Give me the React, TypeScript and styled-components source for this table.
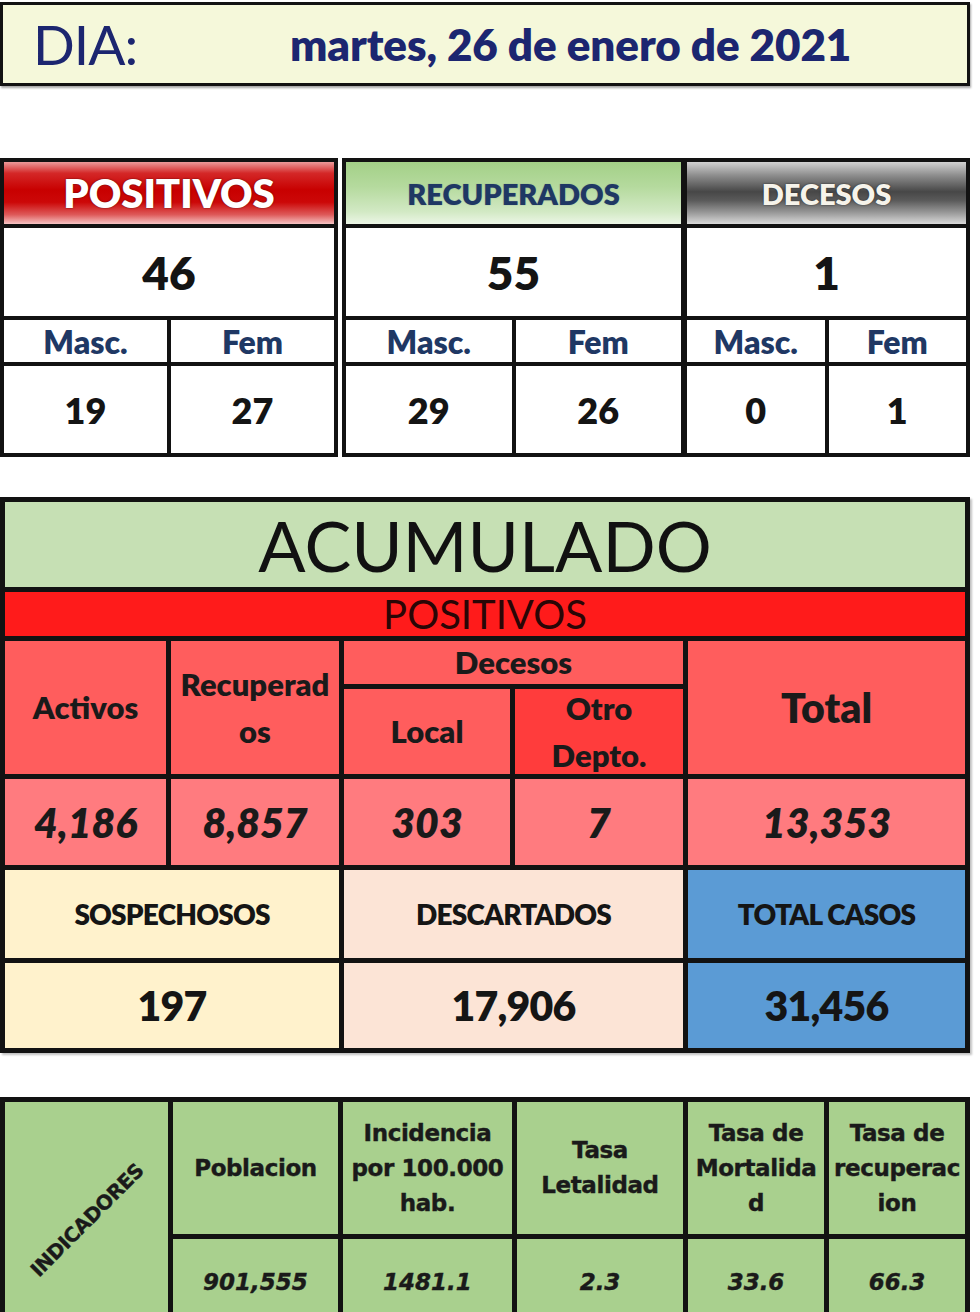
import React from "react";
import styled, { createGlobalStyle, css } from "styled-components";

const GlobalStyle = createGlobalStyle`
  *, *::before, *::after { box-sizing: border-box; }
  html, body { margin: 0; padding: 0; background: #ffffff; }
  body { font-family: Lato, "Open Sans", "Liberation Sans", sans-serif; color: #111; }
`;

const Page = styled.div`
  width: 980px;
  padding-top: 2px;
  display: flex;
  flex-direction: column;
`;

/* ---------- Date bar ---------- */
const DateBar = styled.div`
  width: 970px;
  height: 84px;
  border: 3px solid #121212;
  background: #f5f8da;
  display: flex;
  align-items: center;
  box-shadow: 1px 2px 2px rgba(0, 0, 0, 0.35);
`;

const DiaLabel = styled.span`
  width: 287px;
  padding-left: 30px;
  font-size: 55px;
  font-weight: 400;
  line-height: 1;
  color: #1c2670;
  letter-spacing: -1px;
`;

const DateText = styled.span`
  font-size: 44px;
  font-weight: 800;
  line-height: 1;
  color: #1c2670;
  letter-spacing: -0.1px;
`;

/* ---------- Daily table ---------- */
const DailyRow = styled.div`
  margin-top: 72px;
  width: 970px;
  display: flex;
  gap: 4px;
`;

const Joined = styled.div`
  display: flex;
`;

const Group = styled.div<{ $w: number; $joined?: boolean }>`
  width: ${(p) => p.$w}px;
  border: 4px solid #121212;
  ${(p) => p.$joined && css`border-left-width: 2px;`}
  background: #121212;
  display: grid;
  grid-template-columns: 1fr 1fr;
  grid-template-rows: 62px 88px 42px 87px;
  gap: 4px;
`;

type Tone = "red" | "green" | "grey";

const toneBg: Record<Tone, string> = {
  red: "linear-gradient(to bottom, #ec9a9a 0%, #d42828 18%, #c80000 45%, #cc0808 65%, #de5a5a 85%, #f6c4c4 100%)",
  green: "linear-gradient(to bottom, #a3d087 0%, #b5da9e 40%, #d2e9c4 80%, #ecf6e6 100%)",
  grey: "linear-gradient(to bottom, #d2d2d2 0%, #8c8c8c 22%, #474747 48%, #5a5a5a 62%, #9a9a9a 82%, #dadada 100%)",
};

const toneText: Record<Tone, string> = {
  red: "#ffffff",
  green: "#1f3864",
  grey: "#f6f3ea",
};

const GroupHead = styled.div<{ $tone: Tone; $big?: boolean }>`
  grid-column: 1 / span 2;
  background: ${(p) => toneBg[p.$tone]};
  color: ${(p) => toneText[p.$tone]};
  font-size: ${(p) => (p.$big ? 40 : 29)}px;
  font-weight: 800;
  display: flex;
  align-items: center;
  justify-content: center;
  text-shadow: ${(p) => (p.$tone === "green" ? "0 0 1px rgba(31,56,100,0.5)" : "0 0 2px rgba(0,0,0,0.6)")};
`;

const GroupTotal = styled.div`
  grid-column: 1 / span 2;
  background: #fff;
  font-size: 46px;
  font-weight: 800;
  display: flex;
  align-items: center;
  justify-content: center;
  color: #141414;
`;

const SexLabel = styled.div`
  background: #fff;
  color: #1f3864;
  font-size: 32px;
  font-weight: 800;
  display: flex;
  align-items: center;
  justify-content: center;
`;

const SexValue = styled.div`
  background: #fff;
  color: #141414;
  font-size: 36px;
  font-weight: 800;
  display: flex;
  align-items: center;
  justify-content: center;
`;

/* ---------- Accumulated table ---------- */
const AccGrid = styled.div`
  margin-top: 40px;
  width: 970px;
  border: 5px solid #121212;
  background: #121212;
  display: grid;
  grid-template-columns: 161px 168px 166px 168px 1fr;
  grid-template-rows: 85px 44px 43px 85px 86px 88px 85px;
  gap: 5px;
  box-shadow: 2px 2px 2px rgba(0, 0, 0, 0.25);
`;

const AccTitle = styled.div`
  grid-column: 1 / -1;
  background: #c6e0b4;
  font-size: 70px;
  font-weight: 400;
  color: #111;
  display: flex;
  align-items: center;
  justify-content: center;
  line-height: 1;
`;

const AccBand = styled.div`
  grid-column: 1 / -1;
  background: #ff1b1b;
  font-size: 40px;
  font-weight: 400;
  color: #2a0606;
  display: flex;
  align-items: center;
  justify-content: center;
  line-height: 1;
`;

const HeadCell = styled.div<{ $col: string; $row: string; $dark?: boolean; $size?: number }>`
  grid-column: ${(p) => p.$col};
  grid-row: ${(p) => p.$row};
  background: ${(p) => (p.$dark ? "#ff3c3c" : "#ff5d5d")};
  font-size: ${(p) => p.$size ?? 31}px;
  font-weight: 800;
  line-height: 47px;
  color: #1a1a1a;
  display: flex;
  align-items: center;
  justify-content: center;
  text-align: center;
`;

const AccValue = styled.div`
  background: #ff7b7f;
  font-size: 41px;
  font-weight: 800;
  font-style: italic;
  color: #1a1a1a;
  display: flex;
  align-items: center;
  justify-content: center;
`;

type Kind = "sosp" | "desc" | "total";
const kindBg: Record<Kind, string> = {
  sosp: "#fff2cc",
  desc: "#fce4d6",
  total: "#5b9bd5",
};
const kindCol: Record<Kind, string> = {
  sosp: "1 / span 2",
  desc: "3 / span 2",
  total: "5",
};

const SummaryHead = styled.div<{ $kind: Kind }>`
  grid-column: ${(p) => kindCol[p.$kind]};
  background: ${(p) => kindBg[p.$kind]};
  font-size: 28px;
  font-weight: 800;
  letter-spacing: -0.8px;
  color: #151515;
  display: flex;
  align-items: center;
  justify-content: center;
`;

const SummaryValue = styled(SummaryHead)`
  font-size: 41px;
  letter-spacing: -0.8px;
`;

/* ---------- Indicators ---------- */
const IndGrid = styled.div`
  margin-top: 44px;
  width: 970px;
  border: 5px solid #121212;
  background: #121212;
  display: grid;
  grid-template-columns: 163px 165px 169px 166px 136px 1fr;
  grid-template-rows: 132px 95px;
  gap: 5px;
  font-family: "DejaVu Sans", Verdana, sans-serif;
`;

const IndSide = styled.div`
  grid-row: 1 / span 2;
  background: #a9d08e;
  display: flex;
  align-items: center;
  justify-content: center;
  overflow: hidden;
`;

const IndSideText = styled.span`
  display: inline-block;
  transform: rotate(-45deg);
  font-size: 20px;
  font-weight: 700;
  color: #1a1a1a;
  white-space: nowrap;
  letter-spacing: -0.5px;
  -webkit-text-stroke: 0.4px #1a1a1a;
  margin-top: 4px;
`;

const IndHead = styled.div`
  background: #a9d08e;
  font-size: 23px;
  font-weight: 700;
  line-height: 35px;
  color: #1a1a1a;
  letter-spacing: -0.4px;
  -webkit-text-stroke: 0.4px #1a1a1a;
  display: flex;
  align-items: center;
  justify-content: center;
  text-align: center;
`;

const IndValue = styled.div`
  background: #a9d08e;
  font-size: 23px;
  font-weight: 700;
  font-style: italic;
  color: #1a1a1a;
  -webkit-text-stroke: 0.4px #1a1a1a;
  display: flex;
  align-items: flex-start;
  justify-content: center;
  padding-top: 30px;
`;

const daily = [
  { label: "POSITIVOS", tone: "red" as Tone, total: "46", m: "19", f: "27" },
  { label: "RECUPERADOS", tone: "green" as Tone, total: "55", m: "29", f: "26" },
  { label: "DECESOS", tone: "grey" as Tone, total: "1", m: "0", f: "1" },
];

function DailyGroup({ d, w, joined }: { d: (typeof daily)[number]; w: number; joined?: boolean }) {
  return (
    <Group $w={w} $joined={joined}>
      <GroupHead $tone={d.tone} $big={d.tone === "red"}>
        {d.label}
      </GroupHead>
      <GroupTotal>{d.total}</GroupTotal>
      <SexLabel>Masc.</SexLabel>
      <SexLabel>Fem</SexLabel>
      <SexValue>{d.m}</SexValue>
      <SexValue>{d.f}</SexValue>
    </Group>
  );
}

export default function App() {
  return (
    <>
      <GlobalStyle />
      <Page>
        <DateBar>
          <DiaLabel>DIA:</DiaLabel>
          <DateText>martes, 26 de enero de 2021</DateText>
        </DateBar>

        <DailyRow>
          <DailyGroup d={daily[0]} w={338} />
          <Joined>
            <DailyGroup d={daily[1]} w={343} />
            <DailyGroup d={daily[2]} w={285} joined />
          </Joined>
        </DailyRow>

        <AccGrid>
          <AccTitle>ACUMULADO</AccTitle>
          <AccBand>POSITIVOS</AccBand>
          <HeadCell $col="1" $row="3 / span 2">Activos</HeadCell>
          <HeadCell $col="2" $row="3 / span 2">
            Recuperad
            <br />
            os
          </HeadCell>
          <HeadCell $col="3 / span 2" $row="3">Decesos</HeadCell>
          <HeadCell $col="5" $row="3 / span 2" $size={41}>Total</HeadCell>
          <HeadCell $col="3" $row="4">Local</HeadCell>
          <HeadCell $col="4" $row="4" $dark>
            Otro
            <br />
            Depto.
          </HeadCell>
          <AccValue>4,186</AccValue>
          <AccValue>8,857</AccValue>
          <AccValue>303</AccValue>
          <AccValue>7</AccValue>
          <AccValue>13,353</AccValue>
          <SummaryHead $kind="sosp">SOSPECHOSOS</SummaryHead>
          <SummaryHead $kind="desc">DESCARTADOS</SummaryHead>
          <SummaryHead $kind="total">TOTAL CASOS</SummaryHead>
          <SummaryValue $kind="sosp">197</SummaryValue>
          <SummaryValue $kind="desc">17,906</SummaryValue>
          <SummaryValue $kind="total">31,456</SummaryValue>
        </AccGrid>

        <IndGrid>
          <IndSide>
            <IndSideText>INDICADORES</IndSideText>
          </IndSide>
          <IndHead>Poblacion</IndHead>
          <IndHead>
            Incidencia
            <br />
            por 100.000
            <br />
            hab.
          </IndHead>
          <IndHead>
            Tasa
            <br />
            Letalidad
          </IndHead>
          <IndHead>
            Tasa de
            <br />
            Mortalida
            <br />
            d
          </IndHead>
          <IndHead>
            Tasa de
            <br />
            recuperac
            <br />
            ion
          </IndHead>
          <IndValue>901,555</IndValue>
          <IndValue>1481.1</IndValue>
          <IndValue>2.3</IndValue>
          <IndValue>33.6</IndValue>
          <IndValue>66.3</IndValue>
        </IndGrid>
      </Page>
    </>
  );
}
